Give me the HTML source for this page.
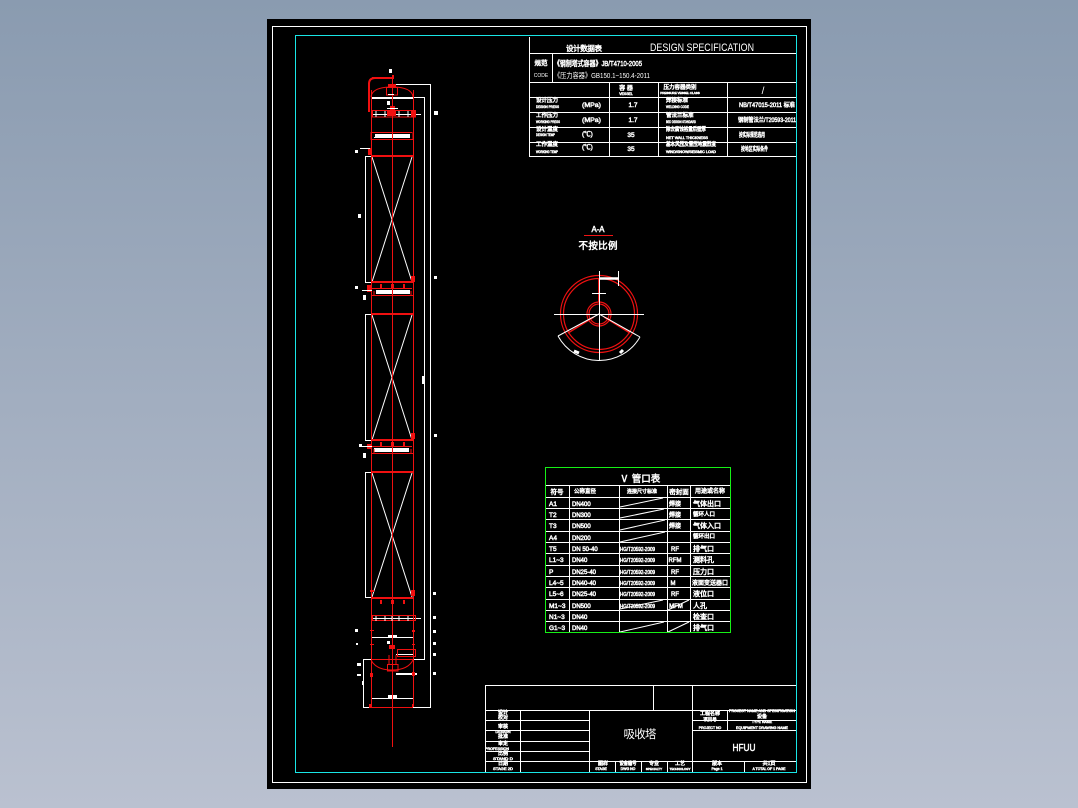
<!DOCTYPE html>
<html><head><meta charset="utf-8"><title>吸收塔</title>
<style>
html,body{margin:0;padding:0;width:1078px;height:808px;overflow:hidden;background:linear-gradient(180deg,#8a9bb0 0%,#bac1d0 100%)}
svg{position:absolute;left:0;top:0;display:block}
text{font-family:"Liberation Sans","Noto Sans CJK SC",sans-serif;fill:#fff}
.b{stroke:#fff;stroke-width:.5}
.m{text-anchor:middle}
</style></head><body>
<svg width="1078" height="808" viewBox="0 0 1078 808" xmlns="http://www.w3.org/2000/svg" shape-rendering="crispEdges">
<rect x="267" y="19" width="544" height="770" fill="#000"/>
<rect x="272.5" y="26.5" width="534" height="756" fill="none" stroke="#fff"/>
<rect x="295.5" y="35.5" width="501" height="737" fill="none" stroke="#19e6e6"/>

<!-- design spec -->
<g fill="none" stroke="#fff">
<path d="M529.5 37V156.5H796M529 53.5H796M529 82.5H796M552.5 53V82M529 97.5H796M529 112.5H796M529 127.5H796M529 142.5H796M609.5 82V156M658.5 82V156M727.5 82V156"/>
</g>
<text x="584" y="51" class="m b" font-size="7.500" textLength="36" lengthAdjust="spacing">设计数据表</text>
<text x="702" y="51" class="m" font-size="11" textLength="104" lengthAdjust="spacingAndGlyphs">DESIGN SPECIFICATION</text>
<text x="541" y="65" class="m b" font-size="6.500">规范</text>
<text x="541" y="77" class="m" font-size="5">CODE</text>
<text x="554" y="66" font-size="7.500" class="b" textLength="88" lengthAdjust="spacingAndGlyphs">《钢制塔式容器》JB/T4710-2005</text>
<text x="554" y="78" font-size="7.500" textLength="96" lengthAdjust="spacingAndGlyphs">《压力容器》GB150.1~150.4-2011</text>
<text x="626" y="90" class="m b" font-size="6">容 器</text>
<text x="626" y="95" class="m b" font-size="3.500">VESSEL</text>
<text x="680" y="89" class="m b" font-size="5.500">压力容器类别</text>
<text x="680" y="94" class="m b" font-size="3">PRESSURE VESSEL CLASS</text>
<text x="763" y="94" class="m" font-size="10">/</text>
<g font-size="5.500" class="b">
<text x="536" y="102">设计压力</text><text x="536" y="117">工作压力</text><text x="536" y="131">设计温度</text><text x="536" y="146">工作温度</text>
<text x="666" y="102" >焊接标准</text><text x="666" y="117">管法兰标准</text><text x="666" y="131" textLength="40" lengthAdjust="spacingAndGlyphs">除去腐蚀裕量后壁厚</text><text x="666" y="146" textLength="50" lengthAdjust="spacingAndGlyphs">基本风压及雪压地震烈度</text>
</g>
<g font-size="3.500" class="b">
<text x="536" y="108" textLength="23" lengthAdjust="spacingAndGlyphs">DESIGN PRESS</text><text x="536" y="123" textLength="24" lengthAdjust="spacingAndGlyphs">WORKING PRESS</text><text x="536" y="136" textLength="19" lengthAdjust="spacingAndGlyphs">DESIGN TEMP</text><text x="536" y="153" textLength="22" lengthAdjust="spacingAndGlyphs">WORKING TEMP</text>
<text x="666" y="108" textLength="23" lengthAdjust="spacingAndGlyphs">WELDING CODE</text><text x="666" y="123" textLength="30" lengthAdjust="spacingAndGlyphs">BED DESIGN STANDARD</text><text x="666" y="139" textLength="42" lengthAdjust="spacingAndGlyphs">NET WALL THICKNESS</text><text x="666" y="153" textLength="50" lengthAdjust="spacingAndGlyphs">WIND/SNOW/SEISMIC LOAD</text>
</g>
<g font-size="6.500" class="b">
<text x="582" y="107" textLength="19" lengthAdjust="spacingAndGlyphs">(MPa)</text><text x="582" y="122" textLength="19" lengthAdjust="spacingAndGlyphs">(MPa)</text><text x="582" y="136">(℃)</text><text x="582" y="149">(℃)</text>
<text x="633" y="107" class="m">1.7</text><text x="633" y="122" class="m">1.7</text><text x="631" y="137" class="m">35</text><text x="631" y="151" class="m">35</text>
</g>
<g font-size="6" class="b">
<text x="739" y="107" textLength="56" lengthAdjust="spacingAndGlyphs">NB/T47015-2011 标准</text>
<text x="738" y="122" textLength="58" lengthAdjust="spacingAndGlyphs">钢制管法兰/T20593-2011</text>
<text x="739" y="137" textLength="26" lengthAdjust="spacingAndGlyphs">按实际规范选用</text>
<text x="741" y="151" textLength="27" lengthAdjust="spacingAndGlyphs">按地区实际条件</text>
</g>

<!-- section A-A -->
<text x="598" y="232" class="m b" font-size="8" textLength="13" lengthAdjust="spacingAndGlyphs">A-A</text>
<rect x="584" y="235" width="29" height="1" fill="#f01414"/>
<text x="598" y="249" class="m b" font-size="9.500" textLength="39" lengthAdjust="spacing">不按比例</text>
<g shape-rendering="auto" fill="none">
<g stroke="#ee1111" stroke-width="1.200">
<circle cx="599" cy="314" r="38.500"/><circle cx="599" cy="314" r="35.500"/><circle cx="599" cy="314" r="12"/><circle cx="599" cy="314" r="10"/>
</g>
<path d="M599 278V302" stroke="#ee1111" stroke-width="2"/>
<path d="M568 333L594 317M630 333L604 317" stroke="#ee1111" stroke-width="1.500"/>
<g stroke="#fff" stroke-width="1">
<path d="M554 314.500H644M599.500 271V361M592 293.500H606M618.500 271V286M558 336L599 314L640 337M558 336A47 47 0 0 0 640 337"/>
<path d="M599 278.500H618" stroke-width="2.500"/>
<path d="M574 351L579 353M620 353L623 350" stroke-width="3"/>
</g>
</g>

<!-- nozzle table -->
<g fill="none" stroke="#fff">
<path d="M546 485.500H730M546 497.500H730M546 508.500H730M546 519.500H730M546 531.500H730M546 542.500H730M546 553.500H730M546 565.500H730M546 576.500H730M546 587.500H730M546 599.500H730M546 610.500H730M546 621.500H730M569.500 485V633M619.500 485V633M667.500 485V633M690.500 485V633"/>
<path shape-rendering="auto" d="M620 507L663 498M620 518L664 509M620 530L665 520M620 542L665 532M620 609L663 600M620 632L664 622M668 610L689 600M668 632L689 622"/>
</g>
<rect x="545.500" y="467.500" width="185" height="165" fill="none" stroke="#16f016"/>
<text x="640" y="482" class="m b" font-size="9.500">Ⅴ 管口表</text>
<g font-size="6.500" class="b m">
<text x="557" y="494">符号</text><text x="585" y="493" font-size="5.500">公称直径</text><text x="642" y="493" font-size="5">连接尺寸标准</text><text x="679" y="494" font-size="6.500">密封面</text><text x="710" y="493" font-size="6">用途或名称</text>
</g>
<g font-size="6.500" class="b">
<text x="549" y="506">A1</text><text x="549" y="517">T2</text><text x="549" y="528">T3</text><text x="549" y="540">A4</text><text x="549" y="551">T5</text><text x="549" y="562">L1~3</text><text x="549" y="574">P</text><text x="549" y="585">L4~5</text><text x="549" y="596">L5~6</text><text x="549" y="608">M1~3</text><text x="549" y="619">N1~3</text><text x="549" y="630">G1~3</text>
</g>
<g font-size="6" class="b">
<text x="572" y="506">DN400</text><text x="572" y="517">DN300</text><text x="572" y="528">DN500</text><text x="572" y="540">DN200</text><text x="572" y="551">DN 50-40</text><text x="572" y="562">DN40</text><text x="572" y="574">DN25-40</text><text x="572" y="585">DN40-40</text><text x="572" y="596">DN25-40</text><text x="572" y="608">DN500</text><text x="572" y="619">DN40</text><text x="572" y="630">DN40</text>
</g>
<g font-size="5.500" class="b">
<text x="620" y="551" textLength="35" lengthAdjust="spacingAndGlyphs">HG/T20592-2009</text><text x="620" y="562" textLength="35" lengthAdjust="spacingAndGlyphs">HG/T20592-2009</text><text x="620" y="574" textLength="35" lengthAdjust="spacingAndGlyphs">HG/T20592-2009</text><text x="620" y="585" textLength="35" lengthAdjust="spacingAndGlyphs">HG/T20592-2009</text><text x="620" y="596" textLength="35" lengthAdjust="spacingAndGlyphs">HG/T20592-2009</text><text x="620" y="608" textLength="35" lengthAdjust="spacingAndGlyphs">HG/T20592-2009</text>
</g>
<g font-size="6" class="b m">
<text x="675" y="506">焊接</text><text x="675" y="517">焊接</text><text x="675" y="528">焊接</text><text x="675" y="551">RF</text><text x="675" y="562">RFM</text><text x="675" y="574">RF</text><text x="673" y="585">M</text><text x="675" y="596">RF</text><text x="676" y="608">MFM</text>
</g>
<g font-size="7" class="b">
<text x="693" y="506">气体出口</text><text x="693" y="516" font-size="5.500">循环人口</text><text x="693" y="528">气体入口</text><text x="693" y="538" font-size="5.500">循环出口</text><text x="693" y="551">排气口</text><text x="693" y="562">测料孔</text><text x="693" y="574">压力口</text><text x="692" y="585" font-size="6" textLength="36" lengthAdjust="spacingAndGlyphs">液面变送器口</text><text x="693" y="596">液位口</text><text x="693" y="608">人孔</text><text x="693" y="619">检查口</text><text x="693" y="630">排气口</text>
</g>

<!-- title block -->
<g fill="none" stroke="#fff">
<path d="M796 685.500H485.500V772M485 710.500H796M653.500 685V710M692.500 685V772M520.500 710V772M589.500 710V772M485 720.500H589M485 730.500H589M485 741.500H589M485 751.500H589M485 761.500H589M589 761.500H796M615.500 761V772M641.500 761V772M667.500 761V772M727.500 710V730M692 720.500H796M692 730.500H796M744.500 761V772"/>
</g>
<g font-size="5" class="m b">
<text x="503" y="714">设计</text><text x="503" y="719">校对</text><text x="503" y="728">审核</text><text x="503" y="733" font-size="4">DESIGN</text><text x="503" y="738">批准</text><text x="503" y="745">审定</text><text x="497" y="750" font-size="3.500" textLength="24" lengthAdjust="spacingAndGlyphs">PROFESSION</text><text x="503" y="755">比例</text><text x="503" y="760" font-size="4" textLength="20" lengthAdjust="spacingAndGlyphs">STAND D</text><text x="503" y="765">日期</text><text x="503" y="770" font-size="4" textLength="20" lengthAdjust="spacingAndGlyphs">STAGE 2D</text>
</g>
<text x="640" y="738" class="m" font-size="11.500" textLength="33" lengthAdjust="spacing">吸收塔</text>
<g font-size="5" class="m b">
<text x="603" y="765">图样</text><text x="601" y="770" font-size="3.500">STAGE</text>
<text x="628" y="765" textLength="17" lengthAdjust="spacingAndGlyphs">设备编号</text><text x="628" y="770" font-size="3.500">DWG NO</text>
<text x="654" y="765">专业</text><text x="654" y="770" font-size="3">SPECIALTY</text>
<text x="680" y="765">工艺</text><text x="680" y="770" font-size="3">TECHNOLOGY</text>
<text x="717" y="765">版本</text><text x="717" y="770" font-size="3.500">Page 1</text>
<text x="769" y="765">共1页</text><text x="769" y="770" font-size="3.500">A TOTAL OF 1 PAGE</text>
</g>
<g class="b m">
<text x="710" y="715" font-size="5">工程名称</text><text x="710" y="721" font-size="4.500">项目号</text><text x="710" y="729" font-size="3.500">PROJECT NO</text>
<text x="762" y="712" font-size="3.500" textLength="66" lengthAdjust="spacingAndGlyphs">PROJECT NAME AND SPECIFICATION</text>
<text x="762" y="718" font-size="5">设备</text><text x="762" y="723" font-size="3.500">TYPE NAME</text>
<text x="762" y="729" font-size="3.500" textLength="52" lengthAdjust="spacingAndGlyphs">EQUIPMENT DRAWING NAME</text>
</g>
<text x="744" y="751" class="m b" font-size="10" textLength="23" lengthAdjust="spacingAndGlyphs">HFUU</text>

<!-- tower white -->
<g fill="none" stroke="#fff">
<path d="M393 84.500H430.500V707.500H363.500V659.500H371M371 97.500H424.500V659.500H413"/>
<path d="M371 156.500H365.500V282.500H371M371 314.500H365.500V440.500H371M371 472.500H365.500V597.500H371"/>
<path shape-rendering="auto" d="M372 157L412 282M412 157L372 282M372 315L412 440M412 315L372 440M372 473L412 597M412 473L372 597"/>
<path d="M371 637.500H413M371 698.500H413M396 654.500H413M372 114.500H421M372 618.500H421M374 137.500H410"/>
</g>
<g fill="#fff">
<rect x="371" y="98" width="42" height="1"/>
<rect x="375" y="134" width="35" height="4"/><rect x="376" y="290" width="34" height="4"/><rect x="374" y="448" width="35" height="4"/>
<rect x="388" y="635" width="9" height="3"/><rect x="388" y="695" width="9" height="3"/>
<rect x="389" y="69" width="3" height="4"/><rect x="387" y="101" width="3" height="4"/><rect x="434" y="111" width="4" height="4"/><rect x="355" y="150" width="3" height="3"/><rect x="358" y="214" width="3" height="4"/>
<rect x="434" y="276" width="3" height="3"/><rect x="355" y="286" width="3" height="3"/><rect x="363" y="295" width="3" height="5"/><rect x="359" y="444" width="3" height="3"/><rect x="363" y="453" width="3" height="5"/><rect x="434" y="434" width="3" height="3"/><rect x="433" y="592" width="3" height="3"/>
<rect x="433" y="616" width="3" height="3"/><rect x="433" y="630" width="3" height="3"/><rect x="433" y="642" width="3" height="3"/><rect x="433" y="653" width="3" height="3"/><rect x="433" y="672" width="3" height="3"/><rect x="355" y="629" width="3" height="3"/><rect x="356" y="643" width="2" height="2"/><rect x="357" y="663" width="4" height="3"/><rect x="357" y="674" width="4" height="2"/><rect x="362" y="681" width="1" height="4"/><rect x="387" y="641" width="3" height="3"/>
<rect x="422" y="376" width="2" height="8"/>
<rect x="396" y="673" width="21" height="2"/>
</g>

<!-- tower red -->
<g fill="#f01010">
<rect x="371" y="90" width="1" height="617"/><rect x="413" y="90" width="1" height="617"/>
<rect x="392" y="75" width="1" height="672"/>
<rect x="371" y="155" width="43" height="2"/><rect x="371" y="281" width="43" height="2"/><rect x="371" y="313" width="43" height="2"/><rect x="371" y="439" width="43" height="2"/><rect x="371" y="471" width="43" height="2"/><rect x="371" y="597" width="43" height="2"/>
<rect x="371" y="659" width="42" height="1"/><rect x="371" y="707" width="42" height="1"/>
<rect x="368" y="83" width="2" height="29"/><rect x="372" y="77" width="21" height="2"/><rect x="392" y="75" width="2" height="4"/>
<rect x="372" y="139" width="41" height="1"/><rect x="372" y="295" width="41" height="1"/><rect x="372" y="453" width="41" height="1"/>
<rect x="380" y="284" width="2" height="4"/><rect x="391" y="284" width="3" height="4"/><rect x="403" y="284" width="2" height="4"/>
<rect x="380" y="442" width="2" height="4"/><rect x="391" y="442" width="3" height="4"/><rect x="403" y="442" width="2" height="4"/>
<rect x="380" y="600" width="2" height="4"/><rect x="391" y="600" width="3" height="4"/><rect x="403" y="600" width="2" height="4"/>
<rect x="368" y="148" width="4" height="7"/><rect x="411" y="110" width="5" height="7"/><rect x="411" y="276" width="4" height="6"/><rect x="367" y="285" width="5" height="7"/><rect x="411" y="433" width="4" height="6"/><rect x="367" y="444" width="5" height="5"/><rect x="411" y="590" width="4" height="6"/>
<rect x="388" y="84" width="8" height="3"/><rect x="390" y="106" width="5" height="4"/><rect x="387" y="111" width="9" height="5"/><rect x="389" y="645" width="6" height="4"/>
<rect x="370" y="590" width="4" height="2"/><rect x="412" y="630" width="3" height="2"/><rect x="370" y="630" width="4" height="1"/><rect x="370" y="644" width="4" height="1"/><rect x="412" y="644" width="3" height="1"/><rect x="370" y="673" width="3" height="4"/><rect x="412" y="672" width="3" height="4"/><rect x="369" y="704" width="2" height="4"/>
<rect x="412" y="704" width="1" height="3"/>
</g>
<g fill="none" stroke="#f01010">
<path shape-rendering="auto" d="M371 97Q372 87 392 87Q412 87 413 97"/>
<path shape-rendering="auto" d="M369 84Q369 78 375 78" stroke-width="2"/>
<rect x="386.500" y="87.500" width="11" height="7.500"/>
<rect x="372.500" y="110.500" width="43" height="6.500"/>
<path d="M372 132.500H412M372 288.500H412M372 446.500H412M371 132V140M413 132V140M374 291V296M411 291V296M374 449V454M411 449V454"/>
<rect x="372.500" y="615.500" width="43" height="5"/>
<rect x="397.500" y="649.500" width="18" height="7"/>
<path shape-rendering="auto" d="M371 660Q376 670 392 670Q408 670 413 660"/>
<path d="M389 655V664M396 655V664"/>
<rect x="387.500" y="664.500" width="10.500" height="6.500"/>
</g>
<g fill="none" stroke="#fff">
<path d="M376 111V117M385 111V117M399 111V117M408 111V117M376 616V621M385 616V621M392 616V621M399 616V621M408 616V621M360 148.500H370M362 290.500H372M362 446.500H372M388 94.500H394M387 108.500H398"/>
</g>
</svg>
</body></html>
